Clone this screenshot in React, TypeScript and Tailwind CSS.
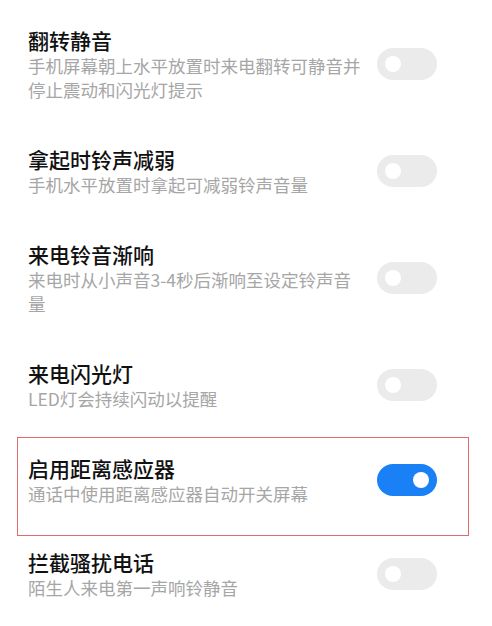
import React from 'react';

type Item = { title: string; desc: string[]; on?: boolean; marked?: boolean };

const ITEMS: Item[] = [
  { title: '翻转静音', desc: ['手机屏幕朝上水平放置时来电翻转可静音并', '停止震动和闪光灯提示'] },
  { title: '拿起时铃声减弱', desc: ['手机水平放置时拿起可减弱铃声音量'] },
  { title: '来电铃音渐响', desc: ['来电时从小声音3-4秒后渐响至设定铃声音', '量'] },
  { title: '来电闪光灯', desc: ['LED灯会持续闪动以提醒'] },
  { title: '启用距离感应器', desc: ['通话中使用距离感应器自动开关屏幕'], on: true, marked: true },
  { title: '拦截骚扰电话', desc: ['陌生人来电第一声响铃静音'] },
];

function Toggle({ on }: { on?: boolean }) {
  return (
    <div
      className={`flex h-[32px] w-[60px] shrink-0 items-center rounded-full px-[8px] ${
        on ? 'justify-end bg-[#1a80f6]' : 'justify-start bg-[#ebebeb]'
      }`}
    >
      <div className="h-[16px] w-[16px] rounded-full bg-white" />
    </div>
  );
}

export default function App() {
  return (
    <main
      className="min-h-screen w-[492px] bg-white pt-[5px]"
      style={{ fontFamily: '"Noto Sans CJK SC", "Noto Sans", sans-serif' }}
    >
      {ITEMS.map((it) => (
        <div
          key={it.title}
          className="relative flex items-center justify-between py-[21.4px] pl-[28px] pr-[55px]"
        >
          {it.marked && (
            <div className="pointer-events-none absolute top-[5px] bottom-[-9px] left-[17px] right-[23px] border-[1.5px] border-[#e26a6a]" />
          )}
          <div className="w-[348px]">
            <div className="text-[21px] font-medium leading-[28px] text-[#111111]">{it.title}</div>
            {it.desc.map((line) => (
              <div key={line} className="text-[17.5px] leading-[24px] text-[#a6a6a6]">
                {line}
              </div>
            ))}
          </div>
          <Toggle on={it.on} />
        </div>
      ))}
    </main>
  );
}
